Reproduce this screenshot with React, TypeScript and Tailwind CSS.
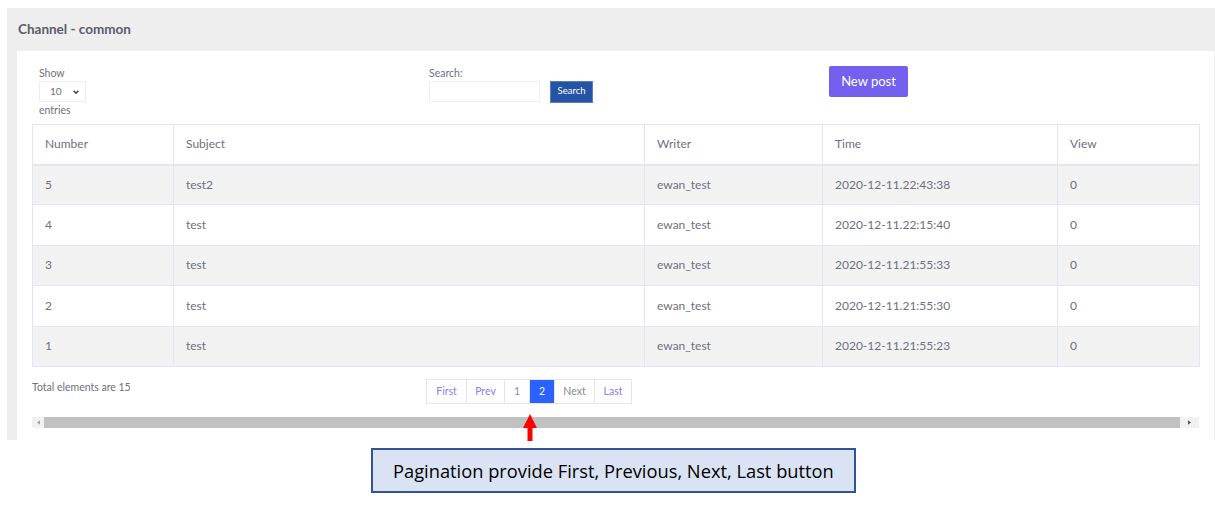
import React from 'react';

interface Post {
  number: number;
  subject: string;
  writer: string;
  time: string;
  view: number;
}

const posts: Post[] = [
  { number: 5, subject: 'test2', writer: 'ewan_test', time: '2020-12-11.22:43:38', view: 0 },
  { number: 4, subject: 'test', writer: 'ewan_test', time: '2020-12-11.22:15:40', view: 0 },
  { number: 3, subject: 'test', writer: 'ewan_test', time: '2020-12-11.21:55:33', view: 0 },
  { number: 2, subject: 'test', writer: 'ewan_test', time: '2020-12-11.21:55:30', view: 0 },
  { number: 1, subject: 'test', writer: 'ewan_test', time: '2020-12-11.21:55:23', view: 0 },
];

const pages = [
  { label: 'First', w: 'w-[39px]', tone: 'text-[#8c7cf0]' },
  { label: 'Prev', w: 'w-[38px]', tone: 'text-[#8c7cf0]' },
  { label: '1', w: 'w-[25px]', tone: 'text-[#8c7cf0]' },
  { label: '2', w: 'w-[25px]', tone: 'text-white', active: true },
  { label: 'Next', w: 'w-[40px]', tone: 'text-[#858796]' },
  { label: 'Last', w: 'w-[37px]', tone: 'text-[#8c7cf0]' },
];

const App: React.FC = () => {
  return (
    <div className="relative min-h-[505px] bg-white font-['Lato',sans-serif] text-[#6e707e]">
      {/* Card */}
      <div className="ml-[7px] pt-[8px]">
        <div className="bg-[#eeeeee] pl-[10px] pr-[1px]">
          <div className="-ml-[10px] flex h-[43px] items-center pl-[11px] text-[13.5px] font-bold text-[#5a5c69]">
            Channel - common
          </div>
          <div className="bg-white px-[15px] pt-[15px] pb-[12px]">
            {/* Controls */}
            <div className="grid grid-cols-3">
              <div className="pl-[7px] text-[10.5px]">
                <div className="leading-[14px]">Show</div>
                <div className="mt-[1px] flex h-[21px] w-[47px] items-center justify-between border border-[#eeeeee] pl-[10px] pr-[5px] text-[10px]">
                  <span>10</span>
                  <svg viewBox="0 0 10 10" className="h-[8px] w-[8px]" fill="none" stroke="#444" strokeWidth="2">
                    <path d="M2 3.5 L5 6.5 L8 3.5" />
                  </svg>
                </div>
                <div className="mt-[1px] leading-[14px]">entries</div>
              </div>
              <div className="pl-[8px] text-[10.5px]">
                <div className="leading-[14px]">Search:</div>
                <div className="mt-[1px] flex items-center">
                  <div className="h-[21px] w-[111px] border border-[#eeeeee]" />
                  <button className="ml-[11px] h-[20px] w-[41px] bg-[#2553a5] text-[9.5px] text-white shadow-[0_0_0_1px_#5b7cc0]">
                    Search
                  </button>
                </div>
              </div>
              <div className="pl-[19px]">
                <button className="h-[31px] w-[79px] rounded-[2px] bg-[#7460ee] text-[13px] text-white">New post</button>
              </div>
            </div>

            {/* Table */}
            <table className="mt-[7px] w-full table-fixed border-collapse text-[12px]">
              <colgroup>
                <col className="w-[141px]" />
                <col className="w-[471px]" />
                <col className="w-[178px]" />
                <col className="w-[235px]" />
                <col className="w-[142px]" />
              </colgroup>
              <thead>
                <tr className="h-[40px]">
                  {['Number', 'Subject', 'Writer', 'Time', 'View'].map((h) => (
                    <th
                      key={h}
                      className="border border-b-2 border-[#e3e6f0] px-[12px] text-left font-normal"
                    >
                      {h}
                    </th>
                  ))}
                </tr>
              </thead>
              <tbody>
                {posts.map((p, i) => (
                  <tr key={p.number} className={`h-[40.4px] ${i % 2 === 0 ? 'bg-[#f2f2f2]' : 'bg-white'}`}>
                    <td className="border border-[#e3e6f0] px-[12px]">{p.number}</td>
                    <td className="border border-[#e3e6f0] px-[12px]">{p.subject}</td>
                    <td className="border border-[#e3e6f0] px-[12px]">{p.writer}</td>
                    <td className="border border-[#e3e6f0] px-[12px]">{p.time}</td>
                    <td className="border border-[#e3e6f0] px-[12px]">{p.view}</td>
                  </tr>
                ))}
              </tbody>
            </table>

            {/* Footer */}
            <div className="mt-[12px] grid grid-cols-3">
              <div className="pt-[1px] text-[10.5px] leading-[14px]">Total elements are 15</div>
              <div className="pl-[5px]">
                <div className="flex h-[25px] w-fit border border-[#e3e6f0] text-[10.5px]">
                  {pages.map((pg, i) => (
                    <div
                      key={pg.label}
                      className={`flex items-center justify-center ${pg.w} ${pg.tone} ${
                        i > 0 ? 'border-l border-[#e3e6f0]' : ''
                      } ${pg.active ? 'bg-[#2962ff]' : ''}`}
                    >
                      {pg.label}
                    </div>
                  ))}
                </div>
              </div>
              <div />
            </div>

            {/* Horizontal scrollbar */}
            <div className="mt-[13px] flex h-[11px] items-center bg-[#f1f1f1]">
              <div className="flex w-[12px] items-center justify-center">
                <svg viewBox="0 0 4 6" className="h-[5px] w-[3px]" fill="#a3a3a3">
                  <path d="M4 0 L0 3 L4 6 Z" />
                </svg>
              </div>
              <div className="h-full flex-1 bg-[#c1c1c1]" />
              <div className="flex w-[19px] items-center justify-center">
                <svg viewBox="0 0 4 6" className="h-[5px] w-[3px]" fill="#505050">
                  <path d="M0 0 L4 3 L0 6 Z" />
                </svg>
              </div>
            </div>
          </div>
        </div>
      </div>

      {/* Annotation */}
      <div className="ml-[371px] mt-[8px] flex h-[45px] w-[485px] items-center border-2 border-[#2f5597] bg-[#dae3f3] pl-[20px] font-['Open_Sans',sans-serif] text-[18.3px] text-black">
        Pagination provide First, Previous, Next, Last button
      </div>

      {/* Red arrow pointing at the active page */}
      <svg className="absolute left-[522px] top-[414px]" width="16" height="28" viewBox="0 0 16 28">
        <path d="M8 0 L15 14 L10.5 14 L10.5 27 L5.5 27 L5.5 14 L1 14 Z" fill="#ff0000" />
      </svg>
    </div>
  );
};

export default App;
